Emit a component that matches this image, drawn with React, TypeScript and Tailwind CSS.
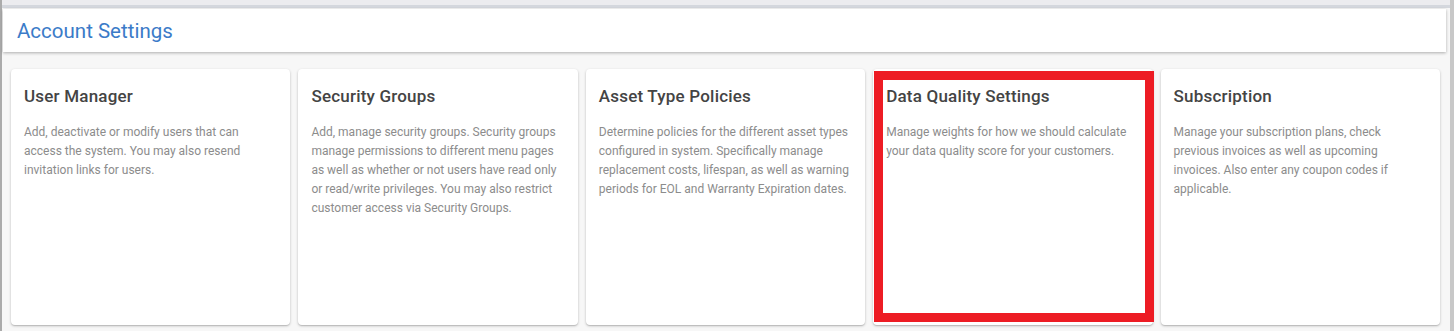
import React from 'react';

const cards = [
  {
    title: 'User Manager',
    text: 'Add, deactivate or modify users that can access the system. You may also resend invitation links for users.',
  },
  {
    title: 'Security Groups',
    text: 'Add, manage security groups. Security groups manage permissions to different menu pages as well as whether or not users have read only or read/write privileges. You may also restrict customer access via Security Groups.',
  },
  {
    title: 'Asset Type Policies',
    text: 'Determine policies for the different asset types configured in system. Specifically manage replacement costs, lifespan, as well as warning periods for EOL and Warranty Expiration dates.',
  },
  {
    title: 'Data Quality Settings',
    text: 'Manage weights for how we should calculate your data quality score for your customers.',
    highlight: true,
  },
  {
    title: 'Subscription',
    text: 'Manage your subscription plans, check previous invoices as well as upcoming invoices. Also enter any coupon codes if applicable.',
  },
];

function SettingCard({ title, text, highlight }: { title: string; text: string; highlight?: boolean }) {
  return (
    <div className="relative bg-white rounded-[4px] shadow-[0_1px_3px_rgba(0,0,0,0.2),0_1px_1px_rgba(0,0,0,0.12)] px-[13px] pt-[15px]">
      <h3 className="text-[17px] leading-[24px] font-medium tracking-[0.2px] text-[#444]">{title}</h3>
      <p className="mt-[15px] text-[12px] leading-[19px] text-[#8c8c8c]">{text}</p>
      {/* annotation box */}
      {highlight && (
        <div className="absolute left-[1px] right-[-1px] top-[2px] bottom-[3px] border-[9px] border-[#ed1c24]"></div>
      )}
    </div>
  );
}

export default function App() {
  return (
    <div className="flex h-[331px] w-full bg-[#f7f7f7] font-['Roboto',sans-serif] overflow-hidden">
      <div className="w-[2px] bg-[#ababab]"></div>
      <div className="flex-1 flex flex-col">
        <div className="h-[5px] bg-[#ececef]"></div>
        <div className="h-[3px] bg-[#d4d7dd]"></div>

        {/* Header */}
        <div className="mt-[1px] ml-[1px] mr-[4px] h-[43px] bg-white shadow-[0_1px_3px_rgba(0,0,0,0.3)] flex items-center px-[14px] pt-[2px]">
          <h1 className="text-[20.5px] text-[#3b7bc8]">Account Settings</h1>
        </div>

        {/* Cards */}
        <div className="grid grid-cols-5 gap-[8px] pl-[9px] pr-[10px] mt-[17px] h-[256px]">
          {cards.map((c) => (
            <SettingCard key={c.title} title={c.title} text={c.text} highlight={c.highlight} />
          ))}
        </div>
      </div>
      <div className="w-[4px] bg-[#c8c8c8]"></div>
    </div>
  );
}
